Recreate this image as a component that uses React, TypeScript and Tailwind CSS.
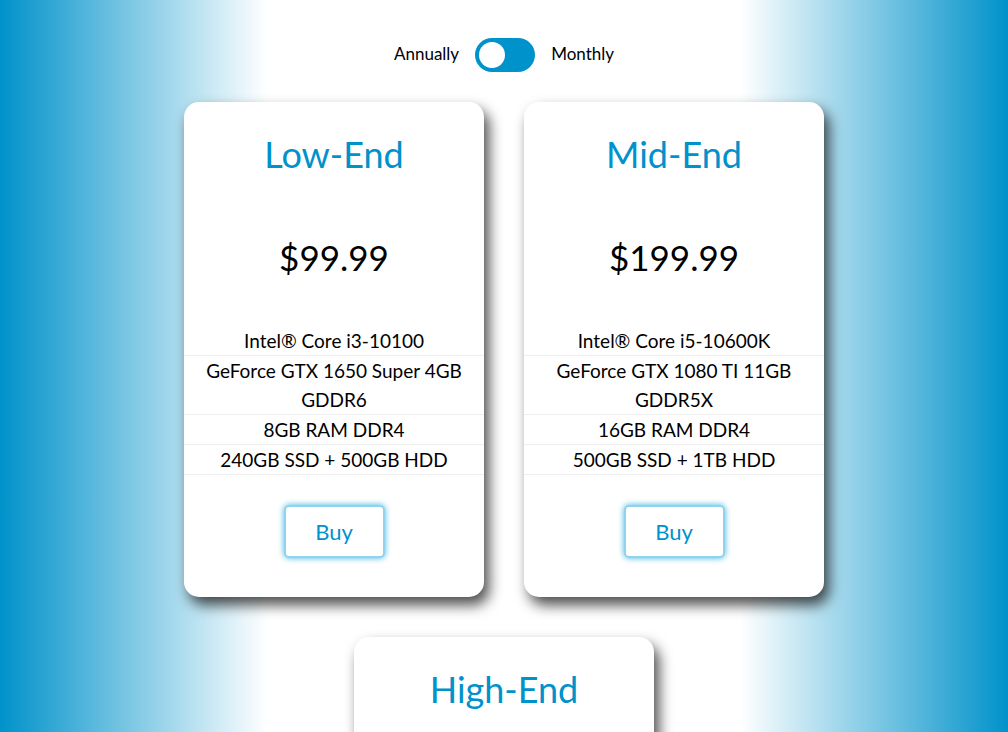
const plans = [
  {
    name: "Low-End",
    price: "$99.99",
    specs: ["Intel® Core i3-10100", "GeForce GTX 1650 Super 4GB GDDR6", "8GB RAM DDR4", "240GB SSD + 500GB HDD"],
  },
  {
    name: "Mid-End",
    price: "$199.99",
    specs: ["Intel® Core i5-10600K", "GeForce GTX 1080 TI 11GB GDDR5X", "16GB RAM DDR4", "500GB SSD + 1TB HDD"],
  },
  {
    name: "High-End",
    price: "$299.99",
    specs: ["Intel® Core i7-10700K", "GeForce RTX 2080 Super 8GB GDDR6", "32GB RAM DDR4", "1TB SSD + 2TB HDD"],
  },
];

function PlanCard({ plan }: { plan: (typeof plans)[number] }) {
  return (
    <div className="w-[300px] bg-white rounded-[15px] shadow-[5px_8px_14px_rgba(0,0,0,0.7)] flex flex-col items-center text-center pb-[39px]">
      <h2 className="mt-[30px] text-[36px] leading-[44px] text-[#0092ca]">{plan.name}</h2>
      <div className="mt-[59px] text-[35px] leading-[44px] text-black">{plan.price}</div>
      <ul className="mt-[47px] w-full">
        {plan.specs.map((s) => (
          <li key={s} className="text-[19px] leading-[29px] text-black border-b border-[#eeeeee] px-1">
            {s}
          </li>
        ))}
      </ul>
      <button className="mt-[30px] w-[101px] h-[53px] rounded-[5px] border-2 border-[#8fd3ee] shadow-[0_0_6px_#3fb4e3] text-[22px] text-[#0092ca] bg-white">
        Buy
      </button>
    </div>
  );
}

export default function App() {
  return (
    <div className="min-h-screen bg-[linear-gradient(to_right,#0092ca,#ffffff_26.5%,#ffffff_73.5%,#0092ca)] font-['Lato',sans-serif]">
      <div className="flex items-center justify-center gap-4 pt-[38px] text-[17px] leading-[34px] text-black">
        <span className="-mt-[2px]">Annually</span>
        <div className="w-[60px] h-[34px] rounded-full bg-[#0092ca] p-[4px] flex items-center">
          <div className="w-[26px] h-[26px] rounded-full bg-white" />
        </div>
        <span className="-mt-[2px]">Monthly</span>
      </div>
      <div className="mx-auto w-[680px] mt-[30px] flex flex-wrap justify-center gap-10 pb-10">
        {plans.map((p) => (
          <PlanCard key={p.name} plan={p} />
        ))}
      </div>
    </div>
  );
}
